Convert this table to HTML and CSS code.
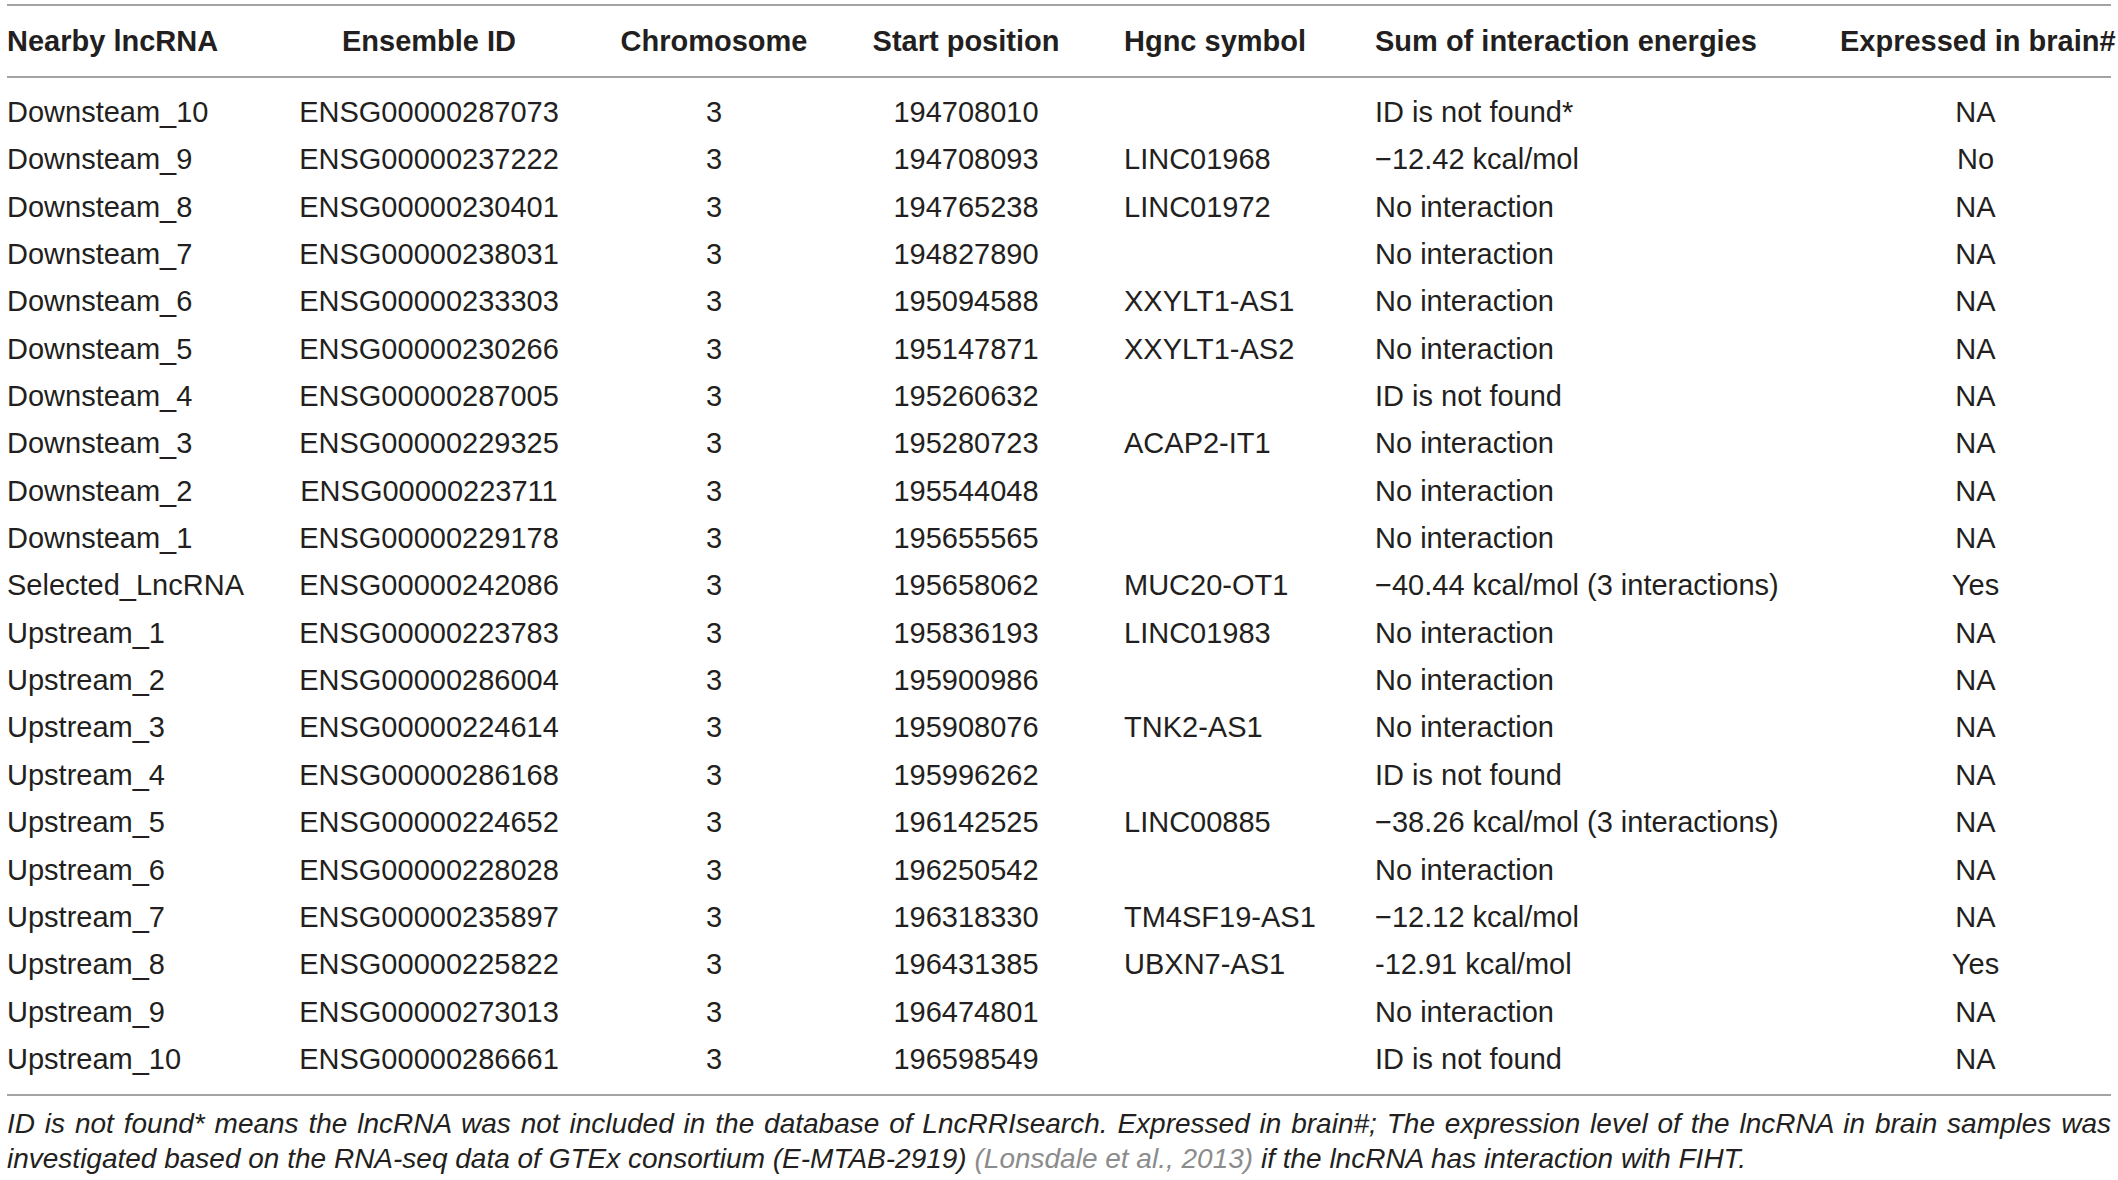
FILE: index.html
```html
<!DOCTYPE html>
<html lang="en">
<head>
<meta charset="utf-8">
<title>Nearby lncRNA table</title>
<link rel="stylesheet" href="styles.css">
</head>
<body>
<div class="wrap">
<table class="t">
<colgroup>
<col class="c1"><col class="c2"><col class="c3"><col class="c4"><col class="c5"><col class="c6"><col class="c7">
</colgroup>
<thead>
<tr>
<th class="l">Nearby lncRNA</th>
<th class="c">Ensemble ID</th>
<th class="c">Chromosome</th>
<th class="c">Start position</th>
<th class="l ind">Hgnc symbol</th>
<th class="l">Sum of interaction energies</th>
<th class="c">Expressed in brain#</th>
</tr>
</thead>
<tbody>
<tr><td class="l">Downsteam_10</td><td class="c">ENSG00000287073</td><td class="c">3</td><td class="c">194708010</td><td class="l ind"></td><td class="l">ID is not found*</td><td class="c">NA</td></tr>
<tr><td class="l">Downsteam_9</td><td class="c">ENSG00000237222</td><td class="c">3</td><td class="c">194708093</td><td class="l ind">LINC01968</td><td class="l">−12.42 kcal/mol</td><td class="c">No</td></tr>
<tr><td class="l">Downsteam_8</td><td class="c">ENSG00000230401</td><td class="c">3</td><td class="c">194765238</td><td class="l ind">LINC01972</td><td class="l">No interaction</td><td class="c">NA</td></tr>
<tr><td class="l">Downsteam_7</td><td class="c">ENSG00000238031</td><td class="c">3</td><td class="c">194827890</td><td class="l ind"></td><td class="l">No interaction</td><td class="c">NA</td></tr>
<tr><td class="l">Downsteam_6</td><td class="c">ENSG00000233303</td><td class="c">3</td><td class="c">195094588</td><td class="l ind">XXYLT1-AS1</td><td class="l">No interaction</td><td class="c">NA</td></tr>
<tr><td class="l">Downsteam_5</td><td class="c">ENSG00000230266</td><td class="c">3</td><td class="c">195147871</td><td class="l ind">XXYLT1-AS2</td><td class="l">No interaction</td><td class="c">NA</td></tr>
<tr><td class="l">Downsteam_4</td><td class="c">ENSG00000287005</td><td class="c">3</td><td class="c">195260632</td><td class="l ind"></td><td class="l">ID is not found</td><td class="c">NA</td></tr>
<tr><td class="l">Downsteam_3</td><td class="c">ENSG00000229325</td><td class="c">3</td><td class="c">195280723</td><td class="l ind">ACAP2-IT1</td><td class="l">No interaction</td><td class="c">NA</td></tr>
<tr><td class="l">Downsteam_2</td><td class="c">ENSG00000223711</td><td class="c">3</td><td class="c">195544048</td><td class="l ind"></td><td class="l">No interaction</td><td class="c">NA</td></tr>
<tr><td class="l">Downsteam_1</td><td class="c">ENSG00000229178</td><td class="c">3</td><td class="c">195655565</td><td class="l ind"></td><td class="l">No interaction</td><td class="c">NA</td></tr>
<tr><td class="l">Selected_LncRNA</td><td class="c">ENSG00000242086</td><td class="c">3</td><td class="c">195658062</td><td class="l ind">MUC20-OT1</td><td class="l">−40.44 kcal/mol (3 interactions)</td><td class="c">Yes</td></tr>
<tr><td class="l">Upstream_1</td><td class="c">ENSG00000223783</td><td class="c">3</td><td class="c">195836193</td><td class="l ind">LINC01983</td><td class="l">No interaction</td><td class="c">NA</td></tr>
<tr><td class="l">Upstream_2</td><td class="c">ENSG00000286004</td><td class="c">3</td><td class="c">195900986</td><td class="l ind"></td><td class="l">No interaction</td><td class="c">NA</td></tr>
<tr><td class="l">Upstream_3</td><td class="c">ENSG00000224614</td><td class="c">3</td><td class="c">195908076</td><td class="l ind">TNK2-AS1</td><td class="l">No interaction</td><td class="c">NA</td></tr>
<tr><td class="l">Upstream_4</td><td class="c">ENSG00000286168</td><td class="c">3</td><td class="c">195996262</td><td class="l ind"></td><td class="l">ID is not found</td><td class="c">NA</td></tr>
<tr><td class="l">Upstream_5</td><td class="c">ENSG00000224652</td><td class="c">3</td><td class="c">196142525</td><td class="l ind">LINC00885</td><td class="l">−38.26 kcal/mol (3 interactions)</td><td class="c">NA</td></tr>
<tr><td class="l">Upstream_6</td><td class="c">ENSG00000228028</td><td class="c">3</td><td class="c">196250542</td><td class="l ind"></td><td class="l">No interaction</td><td class="c">NA</td></tr>
<tr><td class="l">Upstream_7</td><td class="c">ENSG00000235897</td><td class="c">3</td><td class="c">196318330</td><td class="l ind">TM4SF19-AS1</td><td class="l">−12.12 kcal/mol</td><td class="c">NA</td></tr>
<tr><td class="l">Upstream_8</td><td class="c">ENSG00000225822</td><td class="c">3</td><td class="c">196431385</td><td class="l ind">UBXN7-AS1</td><td class="l">-12.91 kcal/mol</td><td class="c">Yes</td></tr>
<tr><td class="l">Upstream_9</td><td class="c">ENSG00000273013</td><td class="c">3</td><td class="c">196474801</td><td class="l ind"></td><td class="l">No interaction</td><td class="c">NA</td></tr>
<tr><td class="l">Upstream_10</td><td class="c">ENSG00000286661</td><td class="c">3</td><td class="c">196598549</td><td class="l ind"></td><td class="l">ID is not found</td><td class="c">NA</td></tr>
</tbody>
</table>
<p class="note">ID is not found* means the lncRNA was not included in the database of LncRRIsearch. Expressed in brain#; The expression level of the lncRNA in brain samples was investigated based on the RNA-seq data of GTEx consortium (E-MTAB-2919) <span class="ref">(Lonsdale et al., 2013)</span> if the lncRNA has interaction with FIHT.</p>
</div>
</body>
</html>
```
FILE: styles.css
```css
html, body {
  margin: 0;
  padding: 0;
  background: #ffffff;
}
body {
  font-family: "Liberation Sans", Arial, sans-serif;
  color: #231f20;
}
.wrap {
  width: 2104px;
  padding: 4px 7px 0 7px;
}
.t {
  width: 2104px;
  table-layout: fixed;
  border-collapse: collapse;
  border-top: 2px solid #a3a3a3;
  border-bottom: 2px solid #a3a3a3;
}
.c1 { width: 283px; }
.c2 { width: 278px; }
.c3 { width: 292px; }
.c4 { width: 212px; }
.c5 { width: 303px; }
.c6 { width: 465px; }
.c7 { width: 271px; }
.t th {
  font-size: 29px;
  font-weight: bold;
  height: 70px;
  padding: 0;
  vertical-align: middle;
  border-bottom: 2px solid #a3a3a3;
  white-space: nowrap;
}
.t td {
  font-size: 29px;
  font-weight: normal;
  line-height: 47.35px;
  padding: 0;
  white-space: nowrap;
}
.t tbody tr:first-child td { padding-top: 11px; }
.t tbody tr:last-child td { padding-bottom: 11px; }
.l { text-align: left; }
.c { text-align: center; }
.ind { text-indent: 52px; }
.note {
  margin: 10px 0 0 0;
  font-size: 28px;
  font-style: italic;
  line-height: 35px;
  text-align: justify;
  color: #231f20;
}
.ref { color: #8c8c8c; }
```
